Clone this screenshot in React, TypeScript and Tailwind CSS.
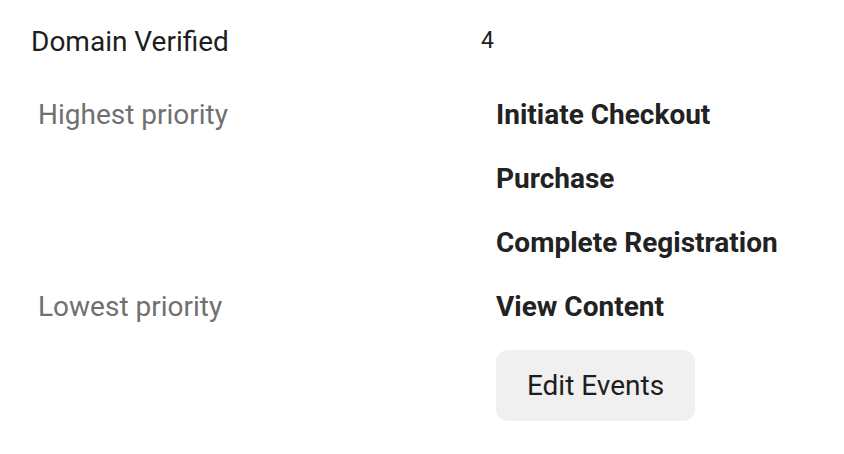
export default function App() {
  const events = ["Initiate Checkout", "Purchase", "Complete Registration", "View Content"];

  return (
    <div className="w-[844px] h-[454px] bg-white text-[#1c1e21] font-['Roboto',sans-serif]">
      <div className="flex items-center h-[83px] pl-[31px]">
        <div className="w-[450px] text-[28px]">Domain Verified</div>
        <div className="text-[23px]">4</div>
      </div>
      <div className="grid grid-cols-[458px_1fr] pl-[38px]">
        {events.map((e, i) => (
          <div key={e} className="contents">
            <div className="h-[64px] flex items-center text-[28px] text-[#707070]">
              {i === 0 ? "Highest priority" : i === events.length - 1 ? "Lowest priority" : ""}
            </div>
            <div className="h-[64px] flex items-center text-[28px] font-bold text-[#222]">{e}</div>
          </div>
        ))}
        <div />
        <div>
          <button className="mt-[11px] w-[199px] h-[71px] rounded-[12px] bg-[#f0f0f0] text-[28px] text-[#1c1e21]">
            Edit Events
          </button>
        </div>
      </div>
    </div>
  );
}
